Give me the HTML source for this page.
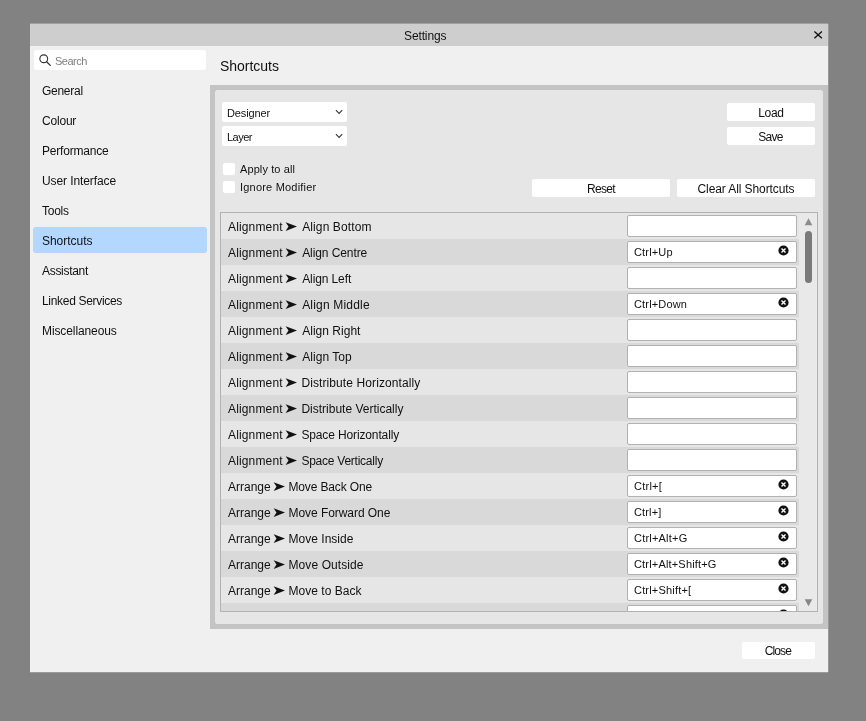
<!DOCTYPE html>
<html lang="en"><head><meta charset="utf-8"><title>Settings</title>
<style>
*{box-sizing:border-box;margin:0;padding:0}
html,body{width:866px;height:721px;overflow:hidden;background:#828282;font-family:"Liberation Sans",sans-serif;color:#111;font-size:12px}
.abs{position:absolute}
#dlg{will-change:transform;position:absolute;left:30px;top:24px;width:798px;height:648px;background:#f0f0f0}
#edge{position:absolute;left:30px;top:23px;width:798px;height:1px;background:#a0a0a0}
#title{position:absolute;left:0;top:0;width:798px;height:22px;background:#cecece}
#title span{position:absolute;left:374px;top:0;line-height:24px;font-size:12px;white-space:nowrap;letter-spacing:-0.12px}
#x{position:absolute;left:783px;top:6px;width:11px;height:11px}
#search{position:absolute;left:4px;top:26px;width:172px;height:20px;background:#fff;border-radius:2px}
#search span{position:absolute;left:21px;top:0;line-height:22px;font-size:11px;color:#808080;letter-spacing:-0.5px}
#search svg{position:absolute;left:4px;top:3px}
.si{position:absolute;left:3px;width:174px;height:26px;line-height:28px;padding-left:9px;font-size:12px;border-radius:3px;white-space:nowrap}
.si.sel{background:#b3d7ff}
#h{position:absolute;left:190px;top:32px;font-size:14px;line-height:20.6px;letter-spacing:-0.02px;white-space:nowrap}
#panel{position:absolute;left:180px;top:61px;width:618px;height:544px;background:#c4c4c4}
#inner{position:absolute;left:5px;top:5px;width:608px;height:534px;background:#e6e6e6;border-radius:2.5px}
.dd{position:absolute;left:7px;width:125px;height:20px;background:#fff;border-radius:2px;font-size:11px;line-height:22px;padding-left:5px;letter-spacing:-0.13px}
.dd svg{position:absolute;right:4px;top:7px}
.cb{position:absolute;left:8px;width:12px;height:12px;background:#fff;border-radius:2px}
.cl{position:absolute;left:25px;font-size:11px;line-height:14px;white-space:nowrap}
.btn{position:absolute;height:18px;background:#fff;border-radius:2px;text-align:center;line-height:20px;font-size:12px;white-space:nowrap}
#list{position:absolute;left:5px;top:122px;width:598px;height:400px;border:1px solid #b2b2b2;overflow:hidden;background:#e9e9e9}
.row{position:absolute;left:0;width:578px;height:26px;background:#e6e6e6}
.row.alt{background:#d9d9d9}
.row .t{position:absolute;top:0;line-height:28px;font-size:12px;white-space:nowrap}
.row i{position:absolute;top:0;font-style:normal;font-family:"DejaVu Sans",sans-serif;font-size:14px;line-height:26px;white-space:nowrap;transform:scaleX(1.2);transform-origin:100% 50%}
.inp{position:absolute;left:406px;top:2px;width:170px;height:22px;background:#fff;border:1px solid #b2b2b2;border-radius:2px;font-size:11px;line-height:20px;padding-left:6px;white-space:nowrap;letter-spacing:0.09px}
.inp svg{position:absolute;right:6.9px;top:3.1px}
</style></head>
<body>
<div id="edge"></div>
<div class="abs" style="left:828px;top:24px;width:1px;height:648px;background:rgba(240,240,240,.2)"></div><div class="abs" style="left:30px;top:672px;width:798px;height:1px;background:rgba(240,240,240,.22)"></div>
<div id="dlg">
<div id="title"><span>Settings</span><svg id="x" viewBox="0 0 11 11"><path d="M1.4 1.5 L8.9 8.3 M8.9 1.5 L1.4 8.3" stroke="#111" stroke-width="1.35" fill="none"/></svg></div>
<div id="search"><svg width="14" height="14" viewBox="0 0 14 14"><circle cx="5.75" cy="5.75" r="3.9" fill="none" stroke="#333" stroke-width="1.1"/><path d="M8.6 8.7 L12.3 12.4" stroke="#333" stroke-width="1.3" stroke-linecap="round"/></svg><span>Search</span></div>
<div class="si" style="top:53px;letter-spacing:-0.27px">General</div>
<div class="si" style="top:83px;letter-spacing:-0.2px">Colour</div>
<div class="si" style="top:113px;letter-spacing:-0.2px">Performance</div>
<div class="si" style="top:143px;letter-spacing:-0.1px">User Interface</div>
<div class="si" style="top:173px;letter-spacing:-0.25px">Tools</div>
<div class="si sel" style="top:203px;letter-spacing:-0.03px">Shortcuts</div>
<div class="si" style="top:233px;letter-spacing:-0.3px">Assistant</div>
<div class="si" style="top:263px;letter-spacing:-0.31px">Linked Services</div>
<div class="si" style="top:293px;letter-spacing:-0.1px">Miscellaneous</div>
<div id="h">Shortcuts</div>
<div id="panel"><div id="inner">
<div class="dd" style="top:12px">Designer<svg width="8" height="6" viewBox="0 0 8 6"><path d="M0.9 1.2 L4.1 4.4 L7.3 1.2" fill="none" stroke="#333" stroke-width="1.05"/></svg></div>
<div class="dd" style="top:36px;letter-spacing:-0.5px">Layer<svg width="8" height="6" viewBox="0 0 8 6"><path d="M0.9 1.2 L4.1 4.4 L7.3 1.2" fill="none" stroke="#333" stroke-width="1.05"/></svg></div>
<div class="cb" style="top:73px"></div><div class="cl" style="top:72px;letter-spacing:0.1px">Apply to all</div>
<div class="cb" style="top:91px"></div><div class="cl" style="top:90px;letter-spacing:0.2px">Ignore Modifier</div>
<div class="btn" style="left:512px;top:13px;width:88px;letter-spacing:-0.3px">Load</div>
<div class="btn" style="left:512px;top:37px;width:88px;letter-spacing:-0.7px;text-indent:-1px">Save</div>
<div class="btn" style="left:317px;top:89px;width:138px;letter-spacing:-0.65px">Reset</div>
<div class="btn" style="left:462px;top:89px;width:138px;letter-spacing:-0.09px">Clear All Shortcuts</div>
<div id="list">
<div class="row" style="top:0px"><span class="t" style="left:7.0px;letter-spacing:0.15px">Alignment</span><i style="left:65.4px">&#10148;</i><span class="t" style="left:81.2px;letter-spacing:0.11px">Align Bottom</span><div class="inp"></div></div>
<div class="row alt" style="top:26px"><span class="t" style="left:7.0px;letter-spacing:0.15px">Alignment</span><i style="left:65.4px">&#10148;</i><span class="t" style="left:81.2px;letter-spacing:-0.092px">Align Centre</span><div class="inp" style="letter-spacing:0.157px">Ctrl+Up<svg width="11" height="11" viewBox="0 0 11 11"><circle cx="5.5" cy="5.5" r="5.1" fill="#111"/><path d="M3.5 3.5 L7.5 7.5 M7.5 3.5 L3.5 7.5" stroke="#fff" stroke-width="1.4"/></svg></div></div>
<div class="row" style="top:52px"><span class="t" style="left:7.0px;letter-spacing:0.15px">Alignment</span><i style="left:65.4px">&#10148;</i><span class="t" style="left:81.2px;letter-spacing:-0.112px">Align Left</span><div class="inp"></div></div>
<div class="row alt" style="top:78px"><span class="t" style="left:7.0px;letter-spacing:0.15px">Alignment</span><i style="left:65.4px">&#10148;</i><span class="t" style="left:81.2px;letter-spacing:0.182px">Align Middle</span><div class="inp" style="letter-spacing:0.165px">Ctrl+Down<svg width="11" height="11" viewBox="0 0 11 11"><circle cx="5.5" cy="5.5" r="5.1" fill="#111"/><path d="M3.5 3.5 L7.5 7.5 M7.5 3.5 L3.5 7.5" stroke="#fff" stroke-width="1.4"/></svg></div></div>
<div class="row" style="top:104px"><span class="t" style="left:7.0px;letter-spacing:0.15px">Alignment</span><i style="left:65.4px">&#10148;</i><span class="t" style="left:81.2px;letter-spacing:0.02px">Align Right</span><div class="inp"></div></div>
<div class="row alt" style="top:130px"><span class="t" style="left:7.0px;letter-spacing:0.15px">Alignment</span><i style="left:65.4px">&#10148;</i><span class="t" style="left:81.2px;letter-spacing:0.05px">Align Top</span><div class="inp"></div></div>
<div class="row" style="top:156px"><span class="t" style="left:7.0px;letter-spacing:0.15px">Alignment</span><i style="left:65.4px">&#10148;</i><span class="t" style="left:80.4px;letter-spacing:0.099px">Distribute Horizontally</span><div class="inp"></div></div>
<div class="row alt" style="top:182px"><span class="t" style="left:7.0px;letter-spacing:0.15px">Alignment</span><i style="left:65.4px">&#10148;</i><span class="t" style="left:80.4px;letter-spacing:0.0px">Distribute Vertically</span><div class="inp"></div></div>
<div class="row" style="top:208px"><span class="t" style="left:7.0px;letter-spacing:0.15px">Alignment</span><i style="left:65.4px">&#10148;</i><span class="t" style="left:80.4px;letter-spacing:-0.13px">Space Horizontally</span><div class="inp"></div></div>
<div class="row alt" style="top:234px"><span class="t" style="left:7.0px;letter-spacing:0.15px">Alignment</span><i style="left:65.4px">&#10148;</i><span class="t" style="left:80.4px;letter-spacing:-0.241px">Space Vertically</span><div class="inp"></div></div>
<div class="row" style="top:260px"><span class="t" style="left:7.0px;letter-spacing:0.0px">Arrange</span><i style="left:53.25px">&#10148;</i><span class="t" style="left:67.5px;letter-spacing:-0.149px">Move Back One</span><div class="inp" style="letter-spacing:0.25px">Ctrl+[<svg width="11" height="11" viewBox="0 0 11 11"><circle cx="5.5" cy="5.5" r="5.1" fill="#111"/><path d="M3.5 3.5 L7.5 7.5 M7.5 3.5 L3.5 7.5" stroke="#fff" stroke-width="1.4"/></svg></div></div>
<div class="row alt" style="top:286px"><span class="t" style="left:7.0px;letter-spacing:0.0px">Arrange</span><i style="left:53.25px">&#10148;</i><span class="t" style="left:67.5px;letter-spacing:-0.053px">Move Forward One</span><div class="inp" style="letter-spacing:0.138px">Ctrl+]<svg width="11" height="11" viewBox="0 0 11 11"><circle cx="5.5" cy="5.5" r="5.1" fill="#111"/><path d="M3.5 3.5 L7.5 7.5 M7.5 3.5 L3.5 7.5" stroke="#fff" stroke-width="1.4"/></svg></div></div>
<div class="row" style="top:312px"><span class="t" style="left:7.0px;letter-spacing:0.0px">Arrange</span><i style="left:53.25px">&#10148;</i><span class="t" style="left:67.5px;letter-spacing:0.02px">Move Inside</span><div class="inp" style="letter-spacing:0.206px">Ctrl+Alt+G<svg width="11" height="11" viewBox="0 0 11 11"><circle cx="5.5" cy="5.5" r="5.1" fill="#111"/><path d="M3.5 3.5 L7.5 7.5 M7.5 3.5 L3.5 7.5" stroke="#fff" stroke-width="1.4"/></svg></div></div>
<div class="row alt" style="top:338px"><span class="t" style="left:7.0px;letter-spacing:0.0px">Arrange</span><i style="left:53.25px">&#10148;</i><span class="t" style="left:67.5px;letter-spacing:0.092px">Move Outside</span><div class="inp" style="letter-spacing:0.175px">Ctrl+Alt+Shift+G<svg width="11" height="11" viewBox="0 0 11 11"><circle cx="5.5" cy="5.5" r="5.1" fill="#111"/><path d="M3.5 3.5 L7.5 7.5 M7.5 3.5 L3.5 7.5" stroke="#fff" stroke-width="1.4"/></svg></div></div>
<div class="row" style="top:364px"><span class="t" style="left:7.0px;letter-spacing:0.0px">Arrange</span><i style="left:53.25px">&#10148;</i><span class="t" style="left:67.5px;letter-spacing:0.019px">Move to Back</span><div class="inp" style="letter-spacing:0.185px">Ctrl+Shift+[<svg width="11" height="11" viewBox="0 0 11 11"><circle cx="5.5" cy="5.5" r="5.1" fill="#111"/><path d="M3.5 3.5 L7.5 7.5 M7.5 3.5 L3.5 7.5" stroke="#fff" stroke-width="1.4"/></svg></div></div>
<div class="row alt" style="top:390px"><span class="t" style="left:7px;letter-spacing:0px">Arrange</span><i style="left:53.25px">&#10148;</i><span class="t" style="left:68.5px;letter-spacing:0px">Move to Front</span><div class="inp" style="letter-spacing:0.09px">Ctrl+Shift+]<svg width="11" height="11" viewBox="0 0 11 11"><circle cx="5.5" cy="5.5" r="5.1" fill="#111"/><path d="M3.5 3.5 L7.5 7.5 M7.5 3.5 L3.5 7.5" stroke="#fff" stroke-width="1.4"/></svg></div></div>
<svg class="abs" style="left:583.3px;top:5px" width="9" height="8" viewBox="0 0 9 8"><path d="M4.5 0.3 L8.3 7.3 L0.7 7.3 Z" fill="#8c8c8c"/></svg>
<div class="abs" style="left:584px;top:18px;width:7px;height:52px;border-radius:4px;background:#7a7a7a"></div>
<svg class="abs" style="left:583.3px;top:386px" width="9" height="8" viewBox="0 0 9 8"><path d="M4.5 7.2 L8.3 0.3 L0.7 0.3 Z" fill="#888"/></svg>
</div>
</div></div>
<div class="btn" style="left:712px;top:618px;width:73px;height:17px;line-height:18px;letter-spacing:-0.9px;text-indent:-1.2px">Close</div>
</div>
</body></html>
